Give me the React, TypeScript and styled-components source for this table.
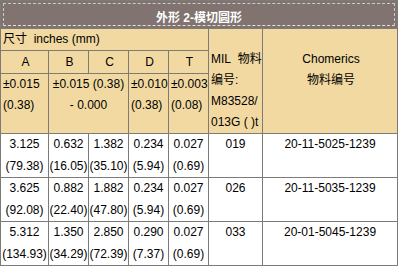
import styled, { createGlobalStyle } from 'styled-components';

interface RowType {
  a: string[];
  b: string[];
  c: string[];
  d: string[];
  t: string[];
  mil: string;
  part: string;
}

const rows: RowType[] = [
  { a: ['3.125', '(79.38)'], b: ['0.632', '(16.05)'], c: ['1.382', '(35.10)'], d: ['0.234', '(5.94)'], t: ['0.027', '(0.69)'], mil: '019', part: '20-11-5025-1239' },
  { a: ['3.625', '(92.08)'], b: ['0.882', '(22.40)'], c: ['1.882', '(47.80)'], d: ['0.234', '(5.94)'], t: ['0.027', '(0.69)'], mil: '026', part: '20-11-5035-1239' },
  { a: ['5.312', '(134.93)'], b: ['1.350', '(34.29)'], c: ['2.850', '(72.39)'], d: ['0.290', '(7.37)'], t: ['0.027', '(0.69)'], mil: '033', part: '20-01-5045-1239' },
];

const GlobalStyle = createGlobalStyle`
  body {
    margin: 0;
    background: #ffffff;
    font-family: "Liberation Sans", "Noto Sans CJK SC", sans-serif;
    font-size: 12px;
    color: #000000;
  }
`;

const Grid = styled.table`
  width: 397px;
  table-layout: fixed;
  border-collapse: collapse;
  border: 1px solid #7d7b78;
  td, th {
    border: 1px solid #7d7b78;
    padding: 0;
    font-weight: 400;
    line-height: 21px;
  }
`;

const TitleCell = styled.th`
  height: 27px;
  background: #807370;
  padding: 0 !important;
`;

const TitleInner = styled.div`
  height: 23px;
  margin: 2px;
  border: 1px dashed #cfcbca;
  border-bottom-color: #e4e2e0;
  box-sizing: border-box;
  padding-top: 5px;
  text-align: center;
  color: #ffffff;
  font-weight: 700;
  font-size: 12px;
  line-height: 18px;
`;

const HeadCell = styled.td<{ $align?: string; $valign?: string; $pad?: number }>`
  background: #f1d9a1;
  text-align: ${(p) => p.$align || 'center'};
  vertical-align: ${(p) => p.$valign || 'middle'};
  padding-top: ${(p) => p.$pad || 0}px !important;
  padding-left: 2px !important;
  white-space: nowrap;
`;

const WrapCell = styled(HeadCell)`
  white-space: normal;
  padding-left: 0 !important;
`;

const LabelRow = styled.tr`
  height: 22px;
`;

const LetterRow = styled.tr`
  height: 23px;
`;

const TolRow = styled.tr`
  height: 60px;
`;

const DataRow = styled.tr`
  height: 44px;
`;

const DataCell = styled.td`
  background: #ffffff;
  text-align: center;
  vertical-align: top;
  white-space: nowrap;
  td& {
    line-height: 21.5px;
  }
`;

const Lines = ({ items }: { items: string[] }) => (
  <>
    {items[0]}
    <br />
    {items[1]}
  </>
);

const App = () => {
  return (
    <>
      <GlobalStyle />
      <Grid>
        <colgroup>
          <col style={{ width: 48 }} />
          <col style={{ width: 40 }} />
          <col style={{ width: 40 }} />
          <col style={{ width: 40 }} />
          <col style={{ width: 40 }} />
          <col style={{ width: 54 }} />
          <col style={{ width: 135 }} />
        </colgroup>
        <tbody>
          <tr>
            <TitleCell colSpan={7}>
              <TitleInner>外形 2-模切圆形</TitleInner>
            </TitleCell>
          </tr>
          <LabelRow>
            <HeadCell colSpan={5} $align="left">
              尺寸&nbsp; inches (mm)
            </HeadCell>
            <HeadCell rowSpan={3} $align="left" $valign="bottom">
              MIL&nbsp; 物料
              <br />
              编号:
              <br />
              M83528/
              <br />
              013G ( )t
            </HeadCell>
            <HeadCell rowSpan={3} $valign="top" $pad={20}>
              Chomerics
              <br />
              物料编号
            </HeadCell>
          </LabelRow>
          <LetterRow>
            <HeadCell>A</HeadCell>
            <HeadCell>B</HeadCell>
            <HeadCell>C</HeadCell>
            <HeadCell>D</HeadCell>
            <HeadCell>T</HeadCell>
          </LetterRow>
          <TolRow>
            <HeadCell $align="left" $valign="top">
              ±0.015
              <br />
              (0.38)
            </HeadCell>
            <WrapCell colSpan={2} $valign="top">
              ±0.015 (0.38)
              <br />- 0.000
            </WrapCell>
            <HeadCell $align="left" $valign="top">
              ±0.010
              <br />
              (0.38)
            </HeadCell>
            <HeadCell $align="left" $valign="top">
              ±0.003
              <br />
              (0.08)
            </HeadCell>
          </TolRow>
          {rows.map((row, i) => (
            <DataRow key={i}>
              <DataCell>
                <Lines items={row.a} />
              </DataCell>
              <DataCell>
                <Lines items={row.b} />
              </DataCell>
              <DataCell>
                <Lines items={row.c} />
              </DataCell>
              <DataCell>
                <Lines items={row.d} />
              </DataCell>
              <DataCell>
                <Lines items={row.t} />
              </DataCell>
              <DataCell>{row.mil}</DataCell>
              <DataCell>{row.part}</DataCell>
            </DataRow>
          ))}
        </tbody>
      </Grid>
    </>
  );
};

export default App;
